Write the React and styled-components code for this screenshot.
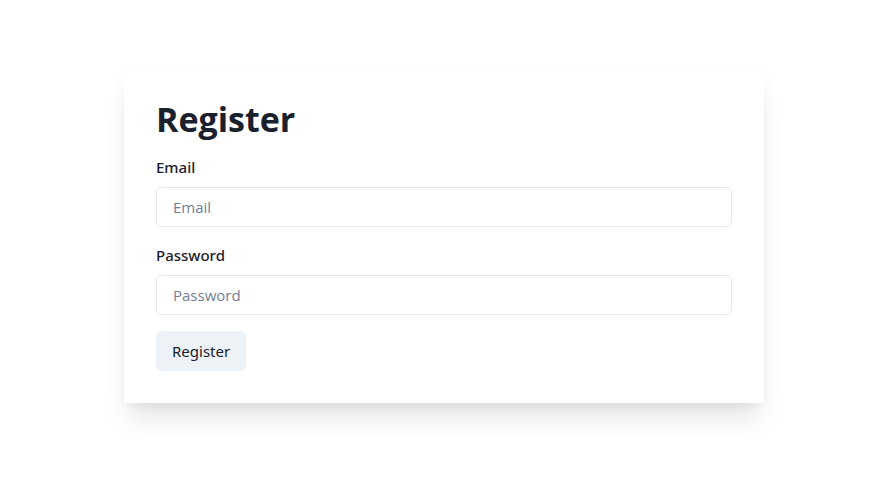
import styled, { createGlobalStyle } from 'styled-components';

const GlobalStyle = createGlobalStyle`
  html, body {
    margin: 0;
    padding: 0;
    background: #ffffff;
    font-family: "Open Sans", "Noto Sans", sans-serif;
    color: #1a202c;
  }
  * {
    box-sizing: border-box;
  }
`;

const App = () => {
  return (
    <Page>
      <GlobalStyle />
      <Card>
        <Title>Register</Title>
        <Field>
          <Label htmlFor='email'>Email</Label>
          <Input id='email' type='email' placeholder='Email' />
        </Field>
        <Field>
          <Label htmlFor='password'>Password</Label>
          <Input id='password' type='password' placeholder='Password' />
        </Field>
        <Button type='button'>Register</Button>
      </Card>
    </Page>
  );
};

export default App;

const Page = styled.div`
  width: 100%;
  min-height: 501px;
  padding: 70px 0 0 124px;
`;

const Card = styled.div`
  width: 640px;
  padding: 32px;
  background: #ffffff;
  box-shadow: 0 20px 25px -5px rgba(0, 0, 0, 0.1),
    0 10px 10px -5px rgba(0, 0, 0, 0.04), 0 0 14px rgba(0, 0, 0, 0.025);
  display: flex;
  flex-direction: column;
  gap: 16px;
`;

const Title = styled.h1`
  margin: -7px 0 -4px 0;
  font-size: 34px;
  line-height: 48px;
  font-weight: 700;
  color: #1a202c;
`;

const Field = styled.div`
  display: flex;
  flex-direction: column;
  gap: 8px;
`;

const Label = styled.label`
  font-family: "Noto Sans", "Open Sans", sans-serif;
  font-size: 15px;
  line-height: 24px;
  font-weight: 500;
  color: #1a202c;
`;

const Input = styled.input`
  width: 100%;
  height: 40px;
  padding: 0 16px;
  border: 1px solid #e2e8f0;
  border-radius: 6px;
  font-family: inherit;
  font-size: 15px;
  color: #1a202c;
  outline: none;
  &::placeholder {
    color: #718096;
  }
`;

const Button = styled.button`
  align-self: flex-start;
  height: 40px;
  padding: 0 16px;
  border: none;
  border-radius: 6px;
  background: #edf2f7;
  font-family: "Noto Sans", "Open Sans", sans-serif;
  font-size: 15px;
  font-weight: 400;
  color: #1a202c;
  cursor: pointer;
`;
